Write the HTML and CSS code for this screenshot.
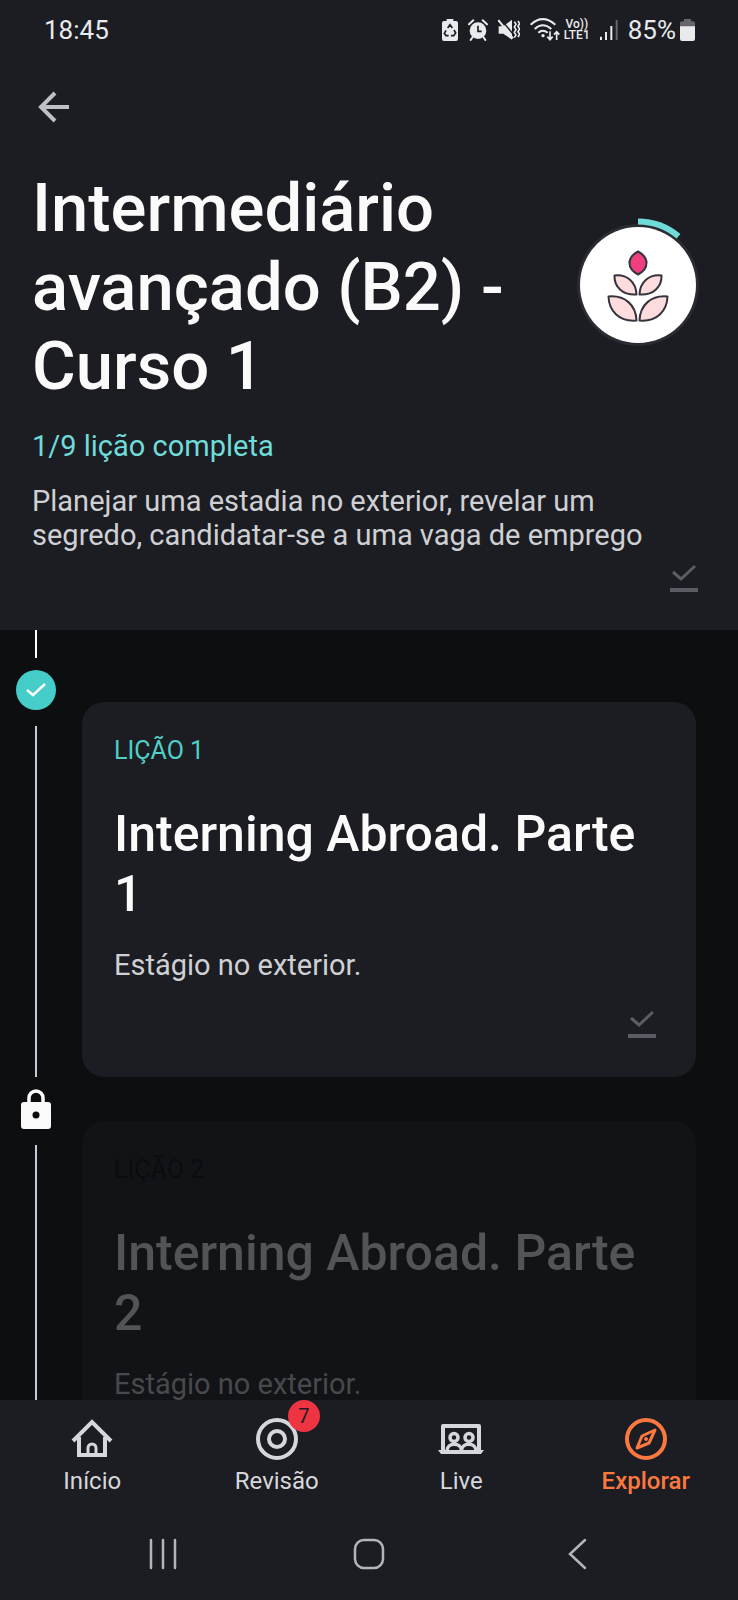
FILE: index.html
```html
<!DOCTYPE html>
<html lang="pt-BR">
<head>
<meta charset="utf-8">
<meta name="viewport" content="width=device-width, initial-scale=1">
<title>Intermediário avançado (B2) - Curso 1</title>
<link rel="stylesheet" href="styles.css">
</head>
<body>
<div class="app">
  <div class="status">
    <time class="status-time">18:45</time>
    <div class="status-icons">
      <svg width="16" height="22" viewBox="0 0 48 66"><path fill="#e9eaec" d="M14 0h20v6h8q6 0 6 6v48q0 6-6 6H6q-6 0-6-6V12q0-6 6-6h8z"/><path d="M17 27l7-10 7 10M36 33l5 9-6 8H27M20 50h-8l-5-7 5-9" fill="none" stroke="#1c1d22" stroke-width="5"/></svg>
      <svg width="20" height="22" viewBox="0 0 60 66"><circle cx="30" cy="35" r="25" fill="#e9eaec"/><path d="M3 16L16 4M57 16L44 4M14 54l-6 9M46 54l6 9" stroke="#e9eaec" stroke-width="6" stroke-linecap="round"/><path d="M30 20v17h11" fill="none" stroke="#1c1d22" stroke-width="5"/></svg>
      <svg width="22" height="22" viewBox="0 0 66 66"><path fill="#e9eaec" d="M2 22h14L42 2v60L16 44H2z"/><path d="M8 0l42 51" stroke="#1c1d22" stroke-width="4"/><path d="M1 3l44 55" stroke="#e9eaec" stroke-width="6"/><path d="M49 8l5 8-5 8 5 8-5 8 5 8-5 8M60 6l5 8-5 8 5 8-5 8 5 8-5 8" fill="none" stroke="#e9eaec" stroke-width="5"/></svg>
      <div class="network">
        <svg width="30" height="24" viewBox="0 0 90 72"><g fill="none" stroke="#e9eaec" stroke-width="6"><path d="M2 20Q38-13 76 20"/><path d="M14 33q24-22 50 0"/><path d="M25 44q13-12 28 0"/><path d="M60 40v24M52 56l8 9 8-9M80 66V42M72 50l8-9 8 9" stroke-width="5"/></g><circle cx="39" cy="53" r="5" fill="#e9eaec"/></svg>
        <div class="volte"><span>Vo))</span><span>LTE1</span></div>
      </div>
      <svg width="18" height="20" viewBox="0 0 54 60"><path d="M3 50v10M18 36v24M34 18v42" stroke="#e9eaec" stroke-width="6"/><path d="M50 0v60" stroke="#65666b" stroke-width="6"/></svg>
      <div class="battery">
        <span>85%</span>
        <svg width="15" height="22" viewBox="0 0 45 66"><path fill="#65666b" d="M12 0h21v7h6q6 0 6 6v11H0V13q0-6 6-6h6z"/><path fill="#e9eaec" d="M0 22h45v38q0 6-6 6H6q-6 0-6-6z"/></svg>
      </div>
    </div>
  </div>

  <header class="course">
    <button class="back" type="button" aria-label="Voltar">
      <svg width="32" height="32" viewBox="0 0 32 32"><path d="M31 16H3M17 2L3 16l14 14" fill="none" stroke="#bfc0c4" stroke-width="4"/></svg>
    </button>
    <div class="course-head">
      <h1>Intermediário avançado (B2) - Curso 1</h1>
      <svg class="emblem" width="134" height="134" viewBox="0 0 134 134">
        <circle cx="67" cy="67" r="61" fill="#2a2b33"/>
        <circle cx="67" cy="67" r="58" fill="#fff"/>
        <path d="M67 3.500A63.500 63.500 0 0 1 107.500 18.200" fill="none" stroke="#6fdcd9" stroke-width="6"/>
        <g stroke="#35333c" stroke-width="2" stroke-linejoin="round">
          <path fill="#ef3f7f" d="M67 33.500Q75.500 38 75.500 45T67 56.500Q58.500 52 58.500 45T67 33.500z"/>
          <g fill="#fcdcdc">
            <path d="M43.500 57.500C56 56 65 64 65.500 76.500C52 77.500 43 69 43.500 57.500z"/>
            <path d="M90.500 57.500C78 56 69 64 68.500 76.500C82 77.500 91 69 90.500 57.500z"/>
            <path d="M37.500 78.500C54 77 65 87 65.500 102.500C48 104 38 93 37.500 78.500z"/>
            <path d="M96.500 78.500C80 77 69 87 68.500 102.500C86 104 96 93 96.500 78.500z"/>
          </g>
        </g>
      </svg>
    </div>
    <p class="progress">1/9 lição completa</p>
    <p class="text">Planejar uma estadia no exterior, revelar um segredo, candidatar-se a uma vaga de emprego</p>
    <button class="download" type="button" aria-label="Baixado">
      <svg width="28" height="28" viewBox="0 0 28 28"><path d="M3 8l8 7L25 2" fill="none" stroke="#5b5c64" stroke-width="3"/><path d="M0 26h28" stroke="#5b5c64" stroke-width="4"/></svg>
    </button>
  </header>

  <main class="lessons">
    <ol>
      <li class="lesson">
        <div class="rail">
          <svg width="40" height="40" viewBox="0 0 40 40"><circle cx="20" cy="20" r="20" fill="#45cdc9"/><path d="M11 20l6 5L29 14" fill="none" stroke="#fff" stroke-width="2.500"/></svg>
        </div>
        <article class="card">
          <p class="label">LIÇÃO 1</p>
          <h2>Interning Abroad. Parte 1</h2>
          <p class="text">Estágio no exterior.</p>
          <button class="download" type="button" aria-label="Baixado">
            <svg width="28" height="28" viewBox="0 0 28 28"><path d="M3 8l8 7L25 2" fill="none" stroke="#5b5c64" stroke-width="3"/><path d="M0 26h28" stroke="#5b5c64" stroke-width="4"/></svg>
          </button>
        </article>
      </li>
      <li class="lesson locked">
        <div class="rail">
          <svg width="40" height="40" viewBox="0 0 40 40"><rect x="5" y="13" width="30" height="27" rx="3" fill="#fafafa"/><path d="M13 14V9a7 7 0 0 1 14 0v5" fill="none" stroke="#fafafa" stroke-width="3.500"/><circle cx="20" cy="26" r="3.500" fill="#0d0e10"/></svg>
        </div>
        <article class="card">
          <p class="label">LIÇÃO 2</p>
          <h2>Interning Abroad. Parte 2</h2>
          <p class="text">Estágio no exterior.</p>
        </article>
      </li>
    </ol>
  </main>

  <nav class="tabs">
    <a href="#inicio">
      <svg width="48" height="48" viewBox="0 0 48 48" fill="none" stroke="#d6d7db" stroke-width="4"><path d="M5 26L24 7l19 19M11 22v18h26V22"/><path d="M20 40v-7a4 4 0 0 1 8 0v7" stroke-width="3"/></svg>
      <span>Início</span>
    </a>
    <a href="#revisao">
      <span class="icon-wrap">
        <svg width="48" height="48" viewBox="0 0 48 48" fill="none" stroke="#d6d7db" stroke-width="4"><circle cx="24" cy="24" r="19"/><circle cx="24" cy="24" r="8"/></svg>
        <b class="badge">7</b>
      </span>
      <span>Revisão</span>
    </a>
    <a href="#live">
      <svg width="48" height="48" viewBox="0 0 48 48" fill="none" stroke="#d6d7db" stroke-width="4"><path d="M6 36V11h36v25" stroke-linejoin="round"/><path d="M1 35h46l-3 4H4z" fill="#d6d7db" stroke="none"/><circle cx="17" cy="22.500" r="4" stroke-width="3.500"/><circle cx="32" cy="22.500" r="4" stroke-width="3.500"/><path d="M10 36c0-9 14.500-9 14.500 0c0-9 14.500-9 14.500 0" stroke-width="3.500"/></svg>
      <span>Live</span>
    </a>
    <a href="#explorar" class="active" aria-current="page">
      <svg width="48" height="48" viewBox="0 0 48 48" fill="none" stroke="#fb7840" stroke-width="4"><circle cx="24" cy="24" r="19"/><path d="M33 15L20 21l-5 12 12-5z" stroke-width="3" stroke-linejoin="round"/><circle cx="24" cy="24" r="1" stroke-width="2"/></svg>
      <span>Explorar</span>
    </a>
  </nav>

  <div class="system">
    <button type="button" aria-label="Recentes"><svg width="32" height="32" viewBox="0 0 32 32"><path d="M4 2v28M16 2v28M28 2v28" stroke="#b4b5b9" stroke-width="2.500" stroke-linecap="round"/></svg></button>
    <button type="button" aria-label="Tela inicial"><svg width="32" height="32" viewBox="0 0 32 32"><rect x="2" y="2" width="28" height="28" rx="9" fill="none" stroke="#b4b5b9" stroke-width="2.500"/></svg></button>
    <button type="button" aria-label="Voltar"><svg width="32" height="32" viewBox="0 0 32 32"><path d="M26 2L11 16l15 14" fill="none" stroke="#b4b5b9" stroke-width="2.500" stroke-linecap="round"/></svg></button>
  </div>
</div>
</body>
</html>
```
FILE: styles.css
```css
* { box-sizing: border-box; margin: 0; padding: 0; }
body {
  background: #0d0e10;
  color: #fafafa;
  font-family: Roboto, "Noto Sans", sans-serif;
}
svg { display: block; flex: none; }
button { background: none; border: 0; display: block; }
ol { list-style: none; }

.app { display: flex; flex-direction: column; height: 100vh; }

.status {
  display: flex;
  justify-content: space-between;
  align-items: center;
  height: 60px;
  padding: 0 43px 0 44px;
  background: #1c1d22;
  color: #e9eaec;
  font-size: 26px;
  line-height: 32px;
}
.status-icons { display: flex; align-items: center; gap: 10px; }
.network, .battery { display: flex; align-items: center; gap: 4px; }
.volte {
  display: flex;
  flex-direction: column;
  align-items: center;
  font-size: 12px;
  font-weight: 500;
  line-height: 11px;
}

.course { background: #1c1d22; padding: 31px 32px 38px; }
.back { padding: 0 6px; }
.course-head {
  display: flex;
  justify-content: space-between;
  align-items: center;
  margin-top: 46px;
}
.emblem { margin: 0 1px 6px 0; }
h1 { max-width: 480px; font-size: 67px; font-weight: 500; line-height: 79px; }
.progress { margin-top: 23px; color: #6fdcd9; font-size: 29px; line-height: 34px; }
.text { color: #cfd0d4; font-size: 29px; line-height: 34px; }
.course .text { margin-top: 21px; }
.download { margin: 12px 6px 0 auto; }
.course .download { margin-right: 8px; }

.lessons { flex: 1; min-height: 0; overflow: hidden; }
.lessons ol::before {
  content: "";
  display: block;
  width: 2px;
  height: 28px;
  margin-left: 35px;
  background: #fff;
}
.lesson { display: grid; grid-template-columns: 82px 1fr; padding-right: 42px; }
.rail {
  display: flex;
  flex-direction: column;
  align-items: center;
  gap: 16px;
  width: 72px;
  padding-top: 12px;
}
.rail::after { content: ""; flex: 1; width: 2px; background: #c3cbdc; }
.card {
  margin-top: 44px;
  padding: 32px 34px 39px 32px;
  border-radius: 22px;
  background: #1c1d22;
}
.label { color: #4fcfc6; font-size: 25px; line-height: 34px; }
h2 { margin: 36px 0 24px; font-size: 50px; font-weight: 500; line-height: 60px; }
.card .download { margin-top: 28px; }
.locked .card { background: #121317; padding-bottom: 94px; }
.locked .label { color: #0b0c0f; }
.locked h2 { color: #535457; }
.locked .text { color: #48494c; }

.tabs {
  display: grid;
  grid-template-columns: repeat(4, 1fr);
  padding-top: 15px;
  background: #1c1d22;
}
.tabs a {
  display: flex;
  flex-direction: column;
  align-items: center;
  gap: 4px;
  color: #d6d7db;
  font-size: 24px;
  line-height: 28px;
  text-decoration: none;
}
.tabs .active { color: #fb7840; font-weight: 500; }
.icon-wrap { position: relative; }
.badge {
  position: absolute;
  top: -15px;
  right: -19px;
  width: 32px;
  height: 32px;
  border-radius: 50%;
  background: #ee3440;
  color: #1c1d22;
  font-size: 20px;
  font-weight: 400;
  line-height: 32px;
  text-align: center;
}
.system {
  display: grid;
  grid-template-columns: repeat(3, 1fr);
  justify-items: center;
  padding: 43px 60px 30px;
  background: #1c1d22;
}
```
